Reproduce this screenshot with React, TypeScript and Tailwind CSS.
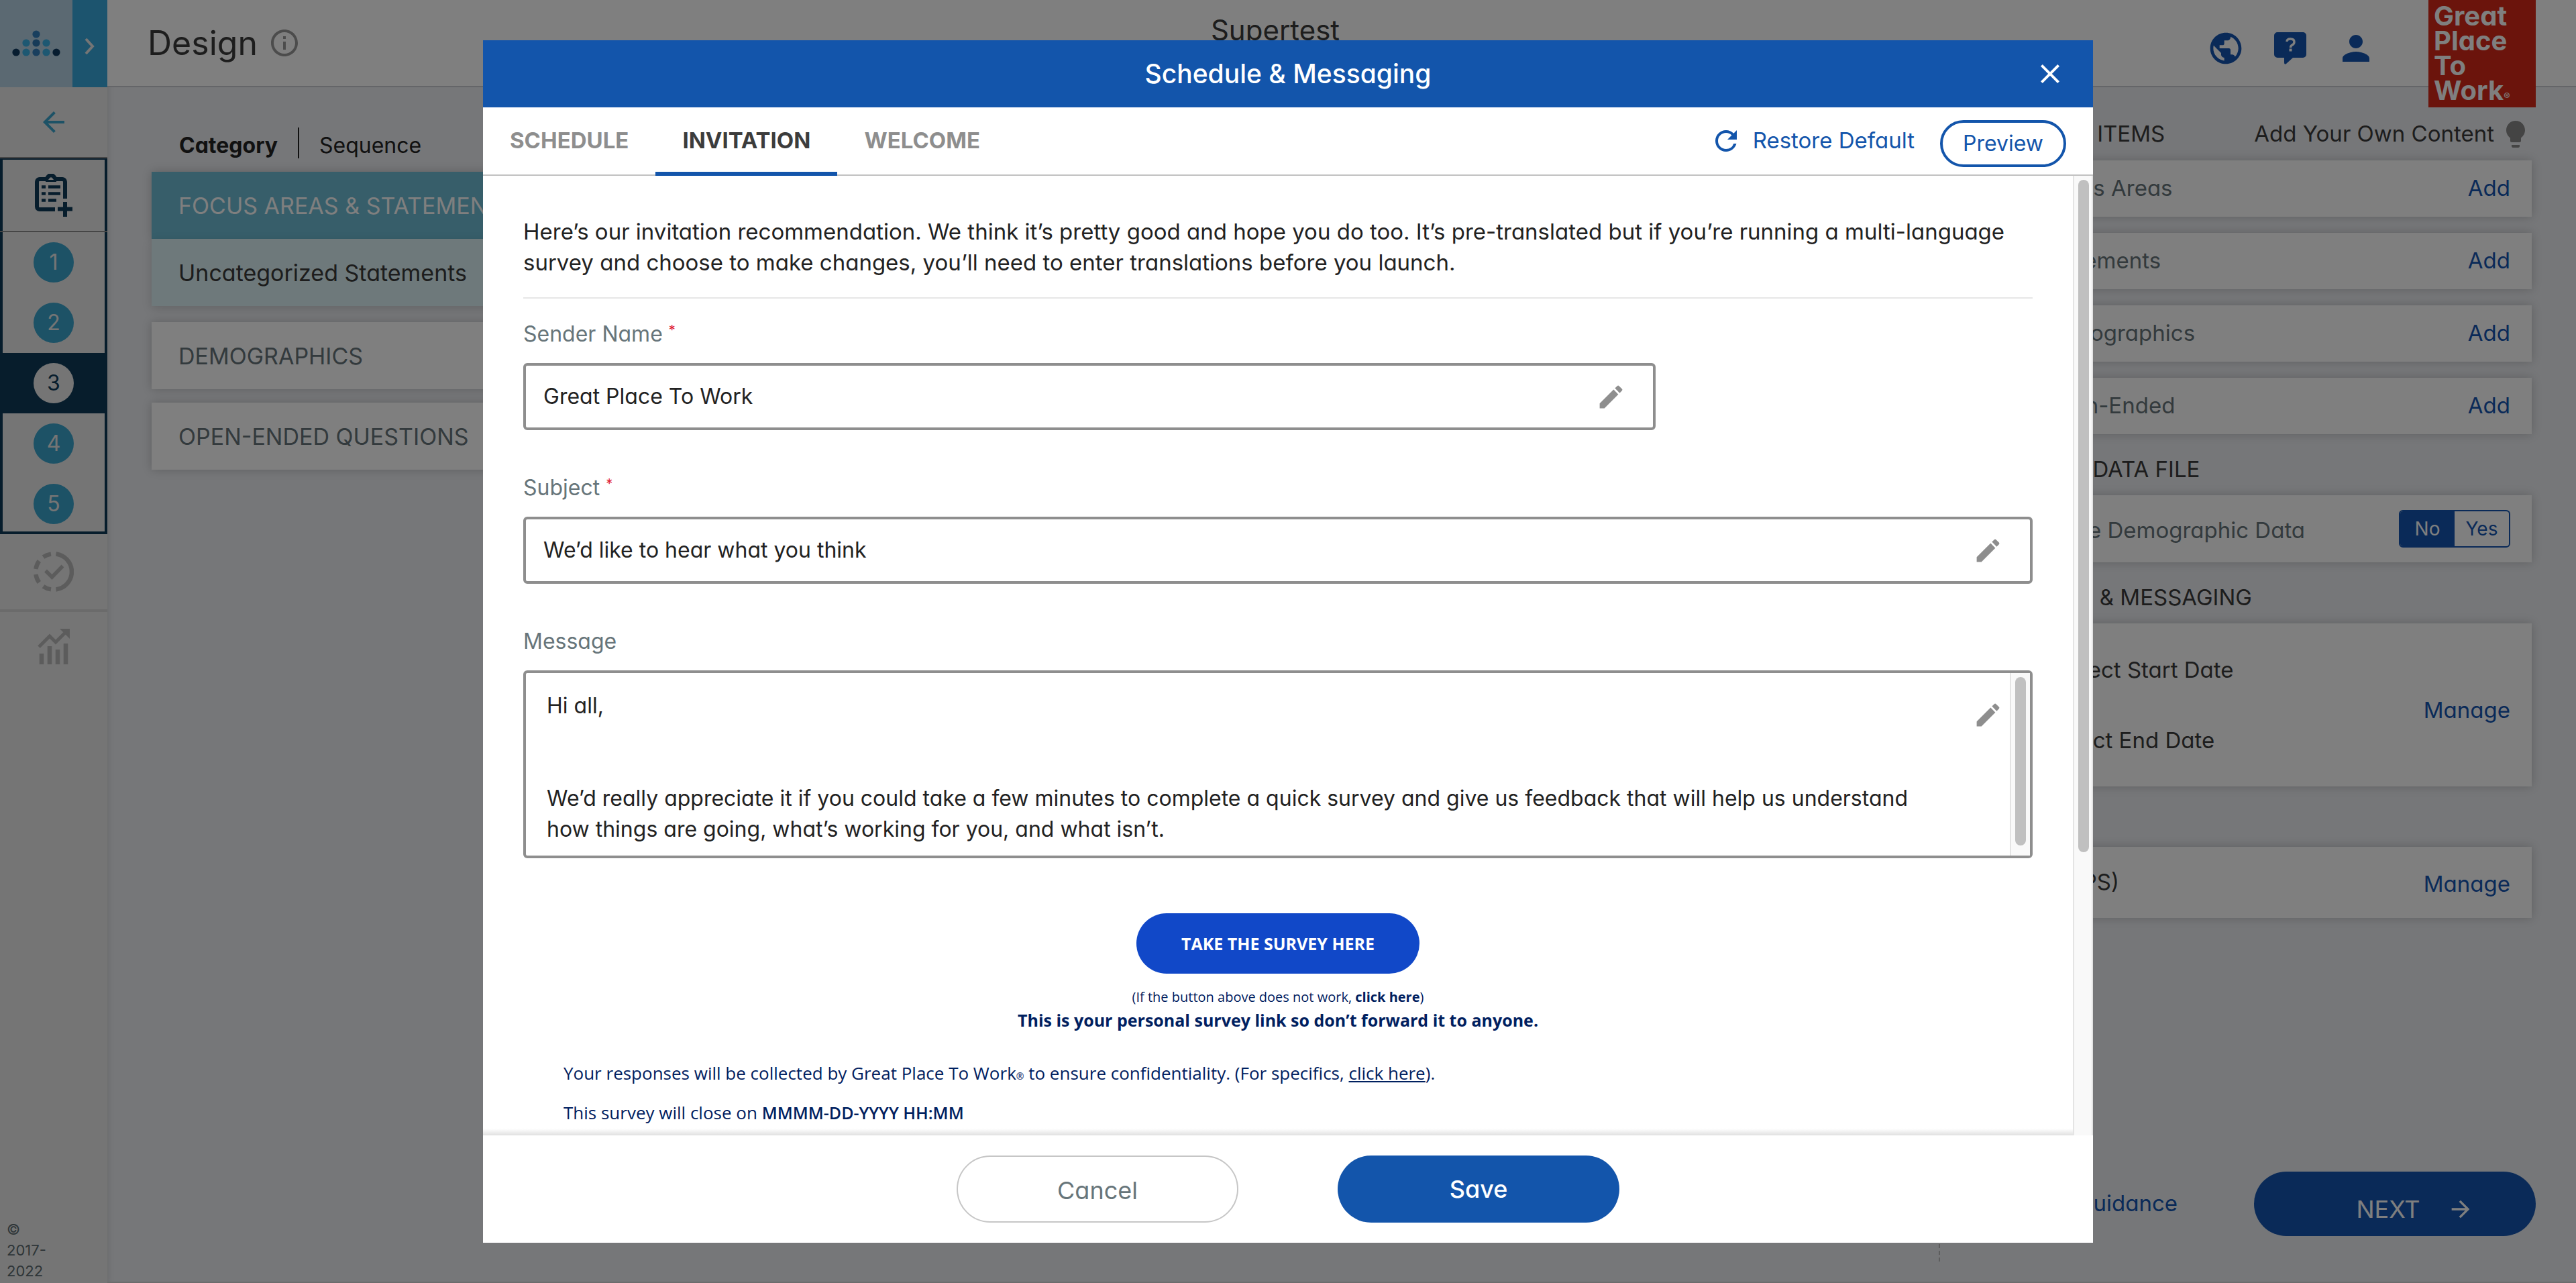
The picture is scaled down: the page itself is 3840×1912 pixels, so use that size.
import React from "react";
import {
  MdArrowBack,
  MdArrowForward,
  MdClose,
  MdEdit,
  MdInfoOutline,
  MdLightbulb,
  MdPerson,
  MdPublic,
  MdRefresh,
} from "react-icons/md";

function DotsLogo() {
  return (
    <svg viewBox="0 0 108 130" className="h-full w-[108px]" aria-hidden="true">
      <rect width="108" height="130" fill="#b6d2e4" />
      <circle cx="54" cy="51" r="5.6" fill="#327ebc" />
      <circle cx="39" cy="64" r="5.6" fill="#3ab0e4" />
      <circle cx="54" cy="64" r="5.6" fill="#2f76b0" />
      <circle cx="69" cy="64" r="5.6" fill="#3ab0e4" />
      <circle cx="24" cy="78" r="5.6" fill="#0e3a60" />
      <circle cx="39" cy="78" r="5.6" fill="#3ab0e4" />
      <circle cx="54" cy="78" r="5.6" fill="#327ebc" />
      <circle cx="69" cy="78" r="5.6" fill="#3ab0e4" />
      <circle cx="84" cy="78" r="5.6" fill="#0e3a60" />
    </svg>
  );
}

function ClipboardIcon() {
  return (
    <svg viewBox="0 0 56 64" className="h-16 w-14" fill="none" stroke="#0e3a58" strokeWidth="6" aria-hidden="true">
      <path d="M30 53H7a4 4 0 0 1-4-4V12a4 4 0 0 1 4-4h10l3-4q4-4 8 0l3 4h10a4 4 0 0 1 4 4v25" />
      <path d="M16 9h16v3H16z" fill="#0e3a58" stroke="none" />
      <g strokeWidth="4.5">
        <path d="M10 19.500h6M20 19.500h18M10 29.500h6M20 29.500h18M10 39.500h6M20 39.500h12" />
      </g>
      <path d="M45 42v22M34 52.500h22" />
    </svg>
  );
}

function ProgressCheckIcon() {
  return (
    <svg viewBox="0 0 60 60" className="h-[60px] w-[60px]" fill="none" stroke="#b9b9b9" strokeWidth="6.500" aria-hidden="true">
      <path d="M33.500 3.500a26.700 26.700 0 0 1 0 53" />
      <path d="M26 56.400a26.700 26.700 0 0 1-11.500-4.600" />
      <path d="M8.300 46a26.700 26.700 0 0 1-4.900-12" />
      <path d="M3.400 26a26.700 26.700 0 0 1 4.900-12" />
      <path d="M14.500 8.200A26.700 26.700 0 0 1 26 3.600" />
      <path d="M18 28.500l9.500 9.500L43.500 21.500" strokeWidth="5.500" />
    </svg>
  );
}

function ChartIcon() {
  return (
    <svg viewBox="0 0 48 54" className="h-[54px] w-12" fill="none" stroke="#b9b9b9" strokeWidth="5" aria-hidden="true">
      <path d="M2 27L18 11l9 9L43 4" />
      <path d="M33 0h15v15z" fill="#b9b9b9" stroke="none" />
      <g strokeWidth="6.500">
        <path d="M6 37v16M18 26v27M30 31v22M42 22v31" />
      </g>
    </svg>
  );
}

function HelpBubble() {
  return (
    <svg viewBox="0 0 48 48" className="h-12 w-12" aria-hidden="true">
      <path d="M5 0h38a5 5 0 0 1 5 5v28a5 5 0 0 1-5 5H28l-10 9q-3 2-3-2v-7H5a5 5 0 0 1-5-5V5a5 5 0 0 1 5-5z" fill="#1455b0" />
      <path d="M19 14q0-4 5.500-4t5.500 4.500q0 3-3 4.500-2.500 1.300-2.500 4" fill="none" stroke="#fff" strokeWidth="3.400" />
      <path d="M22.500 24.500h4v4h-4z" fill="#fff" />
    </svg>
  );
}

function StepCircle({ n, active }: { n: number; active?: boolean }) {
  return (
    <li className={active ? "flex h-[90px] items-center justify-center bg-[#0e3a58]" : "flex h-[90px] items-center justify-center"}>
      <button
        className={
          active
            ? "flex size-[60px] items-center justify-center rounded-full bg-[#ebebeb] text-[32px] text-[#0e3a58]"
            : "flex size-[60px] items-center justify-center rounded-full bg-[#3aa4cc] text-[32px] text-[#ebebeb]"
        }
      >
        {n}
      </button>
    </li>
  );
}

function Sidebar() {
  return (
    <aside className="flex w-[160px] shrink-0 flex-col bg-[#eaeaea] shadow-[0_0_10px_rgba(0,0,0,0.15)]">
      <div className="flex h-[130px]">
        <DotsLogo />
        <button aria-label="Expand menu" className="flex flex-1 items-center justify-center bg-[#38a8dc]">
          <svg viewBox="0 0 16 26" className="mt-2 h-[26px] w-4" fill="none" stroke="#eaeaea" strokeWidth="4" aria-hidden="true">
            <path d="M2 2l10 11L2 24" />
          </svg>
        </button>
      </div>
      <button aria-label="Back" className="flex h-[106px] items-center justify-center border-b-2 border-[#8c8c8c] text-[#3aa4cc]">
        <MdArrowBack size={48} />
      </button>
      <div className="border-x-4 border-t-2 border-b-4 border-[#0e3a58]">
        <div className="-mx-1 flex h-[108px] items-center justify-center border-b-2 border-[#8c8c8c]">
          <ClipboardIcon />
        </div>
        <ol className="-mx-1 -mb-1">
          <StepCircle n={1} />
          <StepCircle n={2} />
          <StepCircle n={3} active />
          <StepCircle n={4} />
          <StepCircle n={5} />
        </ol>
      </div>
      <div className="flex h-[116px] items-center justify-center border-b-4 border-[#d6d6d6]">
        <ProgressCheckIcon />
      </div>
      <div className="flex h-[104px] items-center justify-center">
        <ChartIcon />
      </div>
      <p className="mt-auto w-20 pb-0.5 pl-2.5 text-[22px] leading-[31px] text-[#5d6a70]">© 2017-2022</p>
    </aside>
  );
}

function TopBar() {
  return (
    <header className="flex h-[130px] border-b-2 border-[#c9cbd0] bg-white pr-[60px] pl-[60px]">
      <h1 className="flex flex-1 items-center gap-4 text-[50px] text-[#3a3a3a]">
        Design <MdInfoOutline size={48} className="text-[#999]" />
      </h1>
      <div className="pt-[15px] pr-[198px] text-[42px] leading-[60px] text-[#3a3a3a]">Supertest</div>
      <div className="flex flex-1 items-start justify-end">
        <div className="mt-[42px] flex items-center gap-11 pr-[78px] text-[#1455b0]">
          <button aria-label="Language"><MdPublic size={56} /></button>
          <button aria-label="Help"><HelpBubble /></button>
          <button aria-label="Account"><MdPerson size={60} /></button>
        </div>
        <div className="h-[160px] w-[160px] bg-[#d72818] pt-[5px] pl-2 text-[40px] leading-[37px] font-bold text-white">
          Great
          <br />
          Place
          <br />
          To
          <br />
          Work<span className="text-[14px] font-normal">®</span>
        </div>
      </div>
    </header>
  );
}

function Categories() {
  return (
    <section className="flex-1 pt-[60px] pl-[66px]">
      <div className="flex h-[46px] items-center pl-[41px] text-[32px] text-[#222]">
        <button className="pt-2 pr-[30px] font-bold">Category</button>
        <span className="h-[46px] w-0.5 bg-[#222]" />
        <button className="pt-2 pl-[30px]">Sequence</button>
      </div>
      <ul className="mt-5 text-[34px] text-[#67757a]">
        <li className="flex h-[100px] items-center bg-[#6ebcd4] pl-10 whitespace-nowrap text-white shadow-[0_0_14px_rgba(0,0,0,0.2)]">FOCUS AREAS &amp; STATEMENTS</li>
        <li className="flex h-[100px] items-center bg-[#dcf2f6] pl-10 text-[#3a3a3a] shadow-[0_4px_14px_rgba(0,0,0,0.15)]">Uncategorized Statements</li>
        <li className="mt-6 flex h-[100px] items-center bg-white pl-10 shadow-[0_0_14px_rgba(0,0,0,0.2)]">DEMOGRAPHICS</li>
        <li className="mt-5 flex h-[100px] items-center bg-white pl-10 shadow-[0_0_14px_rgba(0,0,0,0.2)]">OPEN-ENDED QUESTIONS</li>
      </ul>
    </section>
  );
}

function AddRow({ label }: { label: string }) {
  return (
    <li className="flex h-[84px] items-center justify-between bg-white pr-8 pl-[100px] shadow-[0_0_14px_rgba(0,0,0,0.2)]">
      <span className="text-[#67757a]">{label}</span>
      <button className="text-[#1455b0]">Add</button>
    </li>
  );
}

function RightPanel() {
  return (
    <section className="mb-[30px] flex w-[950px] flex-col border-l-2 border-dashed border-[#bbb] pr-[60px] pl-[52px] text-[33px] text-[#3a3a3a]">
      <div className="flex h-[109px] items-center justify-between pt-[31px] pr-1">
        <h2 className="pl-4">ADD NEW ITEMS</h2>
        <span className="flex items-center">
          Add Your Own Content
          <MdLightbulb size={48} className="mr-0.5 ml-2 text-[#888]" />
        </span>
      </div>
      <ul className="mr-1.5 flex flex-col gap-6">
        <AddRow label="Focus Areas" />
        <AddRow label="Statements" />
        <AddRow label="Demographics" />
        <AddRow label="Open-Ended" />
      </ul>
      <h2 className="pt-[29px] leading-[46px]">UPLOAD A DATA FILE</h2>
      <div className="mt-4 mr-1.5 flex h-[100px] items-center justify-between bg-white pr-8 pl-[74px] shadow-[0_0_14px_rgba(0,0,0,0.2)]">
        <span className="pt-1.5 text-[#67757a]">Include Demographic Data</span>
        <div className="flex h-14 w-[166px] overflow-hidden rounded-md border-2 border-[#1455b0] text-[28px]">
          <button className="flex-1 bg-[#1455b0] text-white">No</button>
          <button className="flex-1 text-[#1455b0]">Yes</button>
        </div>
      </div>
      <h2 className="pt-[29px] leading-[46px]">SCHEDULE &amp; MESSAGING</h2>
      <div className="mt-4 mr-1.5 flex h-[243px] items-center justify-between bg-white pr-8 pl-[108px] shadow-[0_0_14px_rgba(0,0,0,0.2)]">
        <div className="flex flex-col gap-[59px] leading-[46px]">
          <span>Project Start Date</span>
          <span>Select End Date</span>
        </div>
        <button className="pt-4 text-[#1455b0]">Manage</button>
      </div>
      <div className="mt-[90px] mr-1.5 flex h-[106px] items-center justify-between bg-white pr-8 pl-[104px] shadow-[0_0_14px_rgba(0,0,0,0.2)]">
        <span>(ENPS)</span>
        <button className="pt-1.5 text-[#1455b0]">Manage</button>
      </div>
      <div className="mt-auto mb-[38px] flex items-center justify-end gap-[114px]">
        <a href="#guidance" className="text-[#1455b0]">View Guidance</a>
        <button className="flex h-24 w-[420px] items-center justify-center gap-10 rounded-full bg-[#1455b0] pt-4 pl-[60px] text-[36px] text-white">
          NEXT <MdArrowForward size={40} />
        </button>
      </div>
    </section>
  );
}

function Field({ id, label, value, width }: { id: string; label: string; value: string; width: string }) {
  return (
    <div className="flex flex-col gap-5">
      <label htmlFor={id} className="text-[32px] leading-[46px] text-[#67757a]">
        {label} <sup className="text-[20px] text-[#e02030]">*</sup>
      </label>
      <div className={width}>
        <input id={id} defaultValue={value} className="min-w-0 flex-1 pl-[26px] text-[32px] text-[#222] outline-none" />
        <button type="button" aria-label={"Edit " + label} className="pr-10">
          <MdEdit size={45} />
        </button>
      </div>
    </div>
  );
}

function EmailPreview() {
  return (
    <div className="mt-[82px] flex flex-col items-center font-['Open_Sans',sans-serif] text-[26px] leading-[34px] text-[#00205f] [font-feature-settings:normal]">
      <button className="h-[90px] w-[422px] rounded-full bg-[#1148c8] text-[25px] font-bold text-white">TAKE THE SURVEY HERE</button>
      <p className="mt-[18px] text-[20px] leading-[34px]">
        (If the button above does not work, <a href="#survey" className="font-bold">click here</a>)
      </p>
      <p className="text-[25px] font-bold">This is your personal survey link so don’t forward it to anyone.</p>
      <p className="mt-[45px] self-start pl-[60px]">
        Your responses will be collected by Great Place To Work<span className="text-[14px]">®</span> to ensure confidentiality. (For specifics,{" "}
        <a href="#specifics" className="underline">click here</a>).
      </p>
      <p className="mt-5 self-start pl-[60px]">
        This survey will close on <b className="text-[25px] font-semibold">MMMM-DD-YYYY HH:MM</b>
      </p>
    </div>
  );
}

const message =
  "Hi all,\n\n\nWe’d really appreciate it if you could take a few minutes to complete a quick survey and give us feedback that will help us understand\nhow things are going, what’s working for you, and what isn’t.";

function ScheduleDialog() {
  return (
    <div role="dialog" aria-label="Schedule & Messaging" className="flex w-5/8 flex-col overflow-hidden bg-white">
      <div className="flex h-[100px] shrink-0 items-center bg-[#1355ab] text-white">
        <span className="w-[100px]" />
        <h2 className="flex-1 text-center text-[39px] font-medium">Schedule &amp; Messaging</h2>
        <button aria-label="Close" className="w-[100px] pl-3">
          <MdClose size={48} />
        </button>
      </div>
      <div className="flex h-[102px] shrink-0 border-b-2 border-[#c2c2c2]">
        <nav className="flex text-[33px] font-bold text-[#8e8e8e]">
          <button className="px-10">SCHEDULE</button>
          <button className="-mb-0.5 border-b-[6px] border-[#1355ab] px-10 pt-1 text-[#3c3c3c]">INVITATION</button>
          <button className="px-10">WELCOME</button>
        </nav>
        <div className="ml-auto flex items-center gap-[38px] pr-10 text-[33px] text-[#1355ab]">
          <button className="flex items-center gap-4">
            <MdRefresh size={48} /> Restore Default
          </button>
          <button className="mt-2 h-[70px] rounded-full border-4 border-[#1355ab] px-[30px] text-[32px]">Preview</button>
        </div>
      </div>
      <div className="relative flex min-h-0 flex-1">
        <div className="min-w-0 flex-1 overflow-hidden pt-[60px] pr-[60px] pl-[60px]">
          <p className="border-b-2 border-[#e6e6e6] pb-[29px] text-[33px] leading-[46px] text-[#222]">
            Here’s our invitation recommendation. We think it’s pretty good and hope you do too. It’s pre-translated but if you’re running a multi-language survey and choose to make changes, you’ll need to enter translations before you launch.
          </p>
          <form className="mt-[30px] flex flex-col gap-[63px]">
            <Field id="sender" label="Sender Name" value="Great Place To Work" width="flex h-[100px] w-3/4 items-stretch rounded-md border-4 border-[#8e8e8e] text-[#8e8e8e]" />
            <Field id="subject" label="Subject" value="We’d like to hear what you think" width="flex h-[100px] items-stretch rounded-md border-4 border-[#8e8e8e] text-[#8e8e8e]" />
            <div className="flex flex-col gap-5">
              <label htmlFor="message" className="text-[32px] leading-[46px] text-[#67757a]">Message</label>
              <div className="flex h-[280px] rounded-md border-4 border-[#8e8e8e]">
                <textarea id="message" defaultValue={message} className="min-w-0 flex-1 resize-none overflow-hidden pt-[26px] pl-[31px] text-[32px] leading-[46px] text-[#222] outline-none" />
                <button type="button" aria-label="Edit message" className="self-start pt-10 pr-2.5 text-[#8e8e8e]">
                  <MdEdit size={45} />
                </button>
                <div className="w-[30px] border-l-2 border-[#e4e4e4] bg-[#f9f9f9] pt-1.5 pl-1.5">
                  <div className="h-[251px] w-4 rounded-full bg-[#c0c0c0]" />
                </div>
              </div>
            </div>
          </form>
          <EmailPreview />
        </div>
        <div className="absolute right-[30px] bottom-0 left-0 h-2.5 bg-linear-to-t from-[#e0e0e0] to-transparent" />
        <div className="w-[30px] border-r-2 border-l-2 border-[#e4e4e4] bg-[#f9f9f9] pt-1.5 pl-1.5">
          <div className="h-[1002px] w-4 rounded-full bg-[#c0c0c0]" />
        </div>
      </div>
      <div className="flex h-[160px] shrink-0 items-center justify-center gap-[148px] text-[36px]">
        <button className="h-[100px] w-[420px] rounded-full border-2 border-[#c6c6c6] pt-1 text-[#67757a]">Cancel</button>
        <button className="h-[100px] w-[420px] rounded-full bg-[#1355ab] font-medium text-white">Save</button>
      </div>
    </div>
  );
}

export default function App() {
  return (
    <div className="relative flex h-screen overflow-hidden bg-[#eceef2] font-['Inter',sans-serif] [font-feature-settings:'cv11']">
      <Sidebar />
      <div className="flex min-w-0 flex-1 flex-col border-b-2 border-[#d8d8d8]">
        <TopBar />
        <main className="flex min-h-0 flex-1">
          <Categories />
          <RightPanel />
        </main>
      </div>
      <div className="absolute inset-0 flex justify-center bg-black/50 py-[60px]">
        <ScheduleDialog />
      </div>
    </div>
  );
}
